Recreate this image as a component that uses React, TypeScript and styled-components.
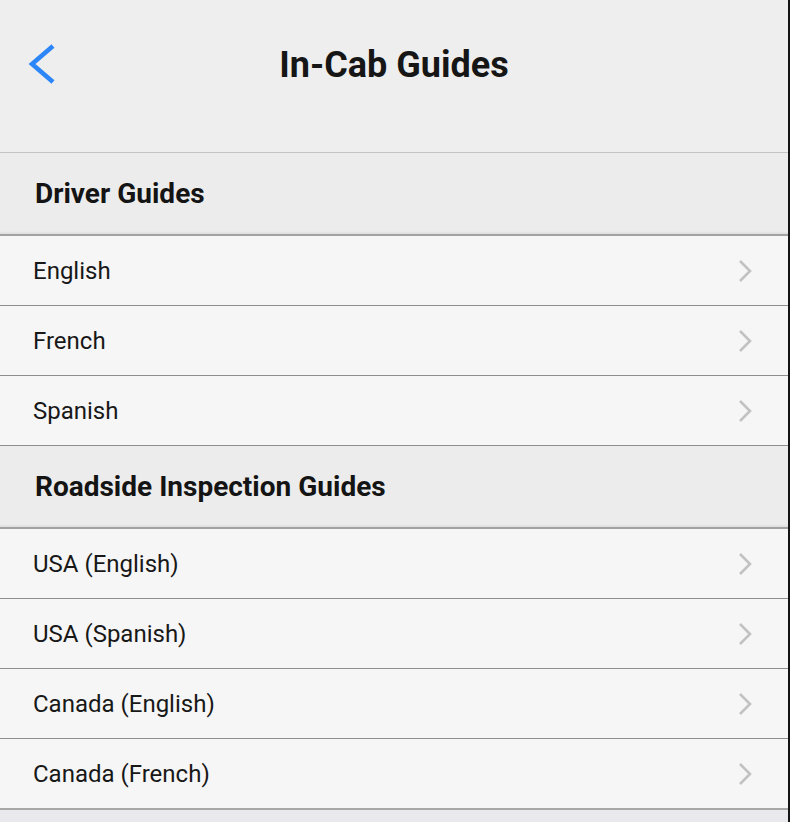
import { FC } from "react";
import styled, { createGlobalStyle } from "styled-components";

const GlobalStyle = createGlobalStyle`
  html, body {
    margin: 0;
    padding: 0;
    background: #e9e9ed;
  }
  body {
    font-family: Roboto, "Noto Sans", sans-serif;
    -webkit-font-smoothing: antialiased;
  }
`;

const Screen = styled.div`
  width: 788px;
  min-height: 822px;
  background: #e9e9ed;
  border-right: 2px solid #141414;
  display: flex;
  flex-direction: column;
`;

const Header = styled.header`
  height: 152px;
  background: #eeeeee;
  border-bottom: 1px solid #c4c4c4;
  display: grid;
  grid-template-columns: 80px 1fr 80px;
  align-items: start;
`;

const BackButton = styled.button`
  height: 128px;
  border: none;
  background: transparent;
  padding: 0 0 0 26px;
  display: flex;
  align-items: center;
  cursor: pointer;
`;

const Title = styled.h1`
  margin: 0;
  height: 130px;
  display: flex;
  align-items: center;
  justify-content: center;
  font-size: 36px;
  font-weight: 700;
  color: #161616;
`;

const SectionHeader = styled.div`
  height: 81px;
  background: #ececec;
  border-bottom: 2px solid #a2a2a2;
  box-shadow: inset 0 -3px 3px -2px rgba(0, 0, 0, 0.08);
  display: flex;
  align-items: center;
  padding-left: 35px;
  font-size: 28px;
  font-weight: 700;
  color: #141414;
`;

const Row = styled.div<{ $last?: boolean }>`
  height: 69px;
  background: #f6f6f6;
  border-bottom: ${({ $last }) => ($last ? "2px solid #a8a8a8" : "1px solid #8e8e8e")};
  display: flex;
  align-items: center;
  justify-content: space-between;
  padding: 0 34px 0 33px;
  font-size: 24px;
  color: #181818;
  cursor: pointer;
`;

const Chevron: FC = () => (
  <svg width="18" height="26" viewBox="0 0 18 26">
    <path d="M4 3 L14 13 L4 23" fill="none" stroke="#c2c2c2" strokeWidth="2.6" />
  </svg>
);

const BackIcon: FC = () => (
  <svg width="32" height="44" viewBox="0 0 32 44">
    <path d="M27 4 L6 22 L27 40" fill="none" stroke="#2d86f7" strokeWidth="4.5" />
  </svg>
);

const sections = [
  { title: "Driver Guides", items: ["English", "French", "Spanish"] },
  {
    title: "Roadside Inspection Guides",
    items: ["USA (English)", "USA (Spanish)", "Canada (English)", "Canada (French)"],
  },
];

export default function App() {
  return (
    <>
      <GlobalStyle />
      <Screen>
        <Header>
          <BackButton aria-label="Back">
            <BackIcon />
          </BackButton>
          <Title>In-Cab Guides</Title>
          <div />
        </Header>
        {sections.map((s, si) => (
          <div key={s.title}>
            <SectionHeader>{s.title}</SectionHeader>
            {s.items.map((item, i) => (
              <Row key={item} $last={si === sections.length - 1 && i === s.items.length - 1}>
                {item}
                <Chevron />
              </Row>
            ))}
          </div>
        ))}
      </Screen>
    </>
  );
}
